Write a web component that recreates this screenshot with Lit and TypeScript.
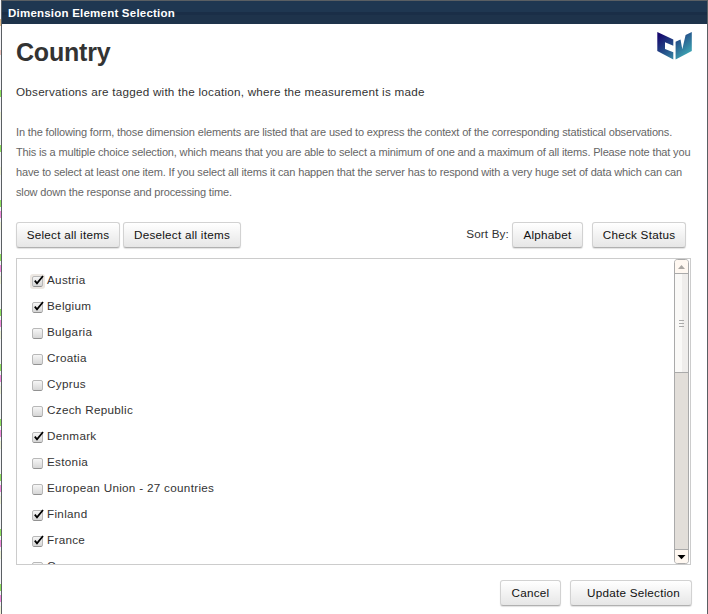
import { LitElement, html, css, svg } from "lit";
import { customElement, property } from "lit/decorators.js";
import { classMap } from "lit/directives/class-map.js";

@customElement("push-button")
class PushButton extends LitElement {
  static styles = css`
    :host { display: block; flex: none; }
    button {
      box-sizing: border-box; width: 100%; height: 26px; padding: 0; display: block;
      border: 1px solid #d2d2d2; border-bottom-color: #b0b0b0; border-radius: 3px;
      background: linear-gradient(#ffffff, #e6e6e6);
      box-shadow: 0 1px 1px rgba(0, 0, 0, 0.12);
      font: 11.7px/24px "Liberation Sans", Arial, sans-serif; letter-spacing: 0.25px; color: #111; white-space: nowrap;
    }
  `;
  render() {
    return html`<button><slot></slot></button>`;
  }
}

@customElement("check-item")
class CheckItem extends LitElement {
  @property() label = "";
  @property({ type: Boolean }) checked = false;
  @property({ type: Boolean }) focused = false;
  static styles = css`
    :host { display: flex; height: 26px; }
    .box { width: 15px; height: 15px; margin-top: 7px; border-radius: 3px; flex: none; }
    .hot { background: #ece7e2; }
    svg { display: block; overflow: visible; }
    .label { font: 11.7px/26px "Liberation Sans", Arial, sans-serif; letter-spacing: 0.3px; color: #333; margin-left: 2px; white-space: nowrap; }
  `;
  render() {
    return html`
      <div class=${classMap({ box: true, hot: this.focused })}>
        <svg width="15" height="15" viewBox="0 0 15 15">
          <defs><linearGradient id="g" x1="0" y1="0" x2="0" y2="1">
            <stop offset="0" stop-color="#f8f8f8"></stop><stop offset="1" stop-color="#d4d4d4"></stop>
          </linearGradient></defs>
          <rect x="2.5" y="2.5" width="10" height="10" rx="1.5" fill="url(#g)" stroke="#b8b8b8"></rect>
          <path d="M3.5 12.5H11.5" stroke="#929292"></path>
          ${this.checked ? svg`<path d="M4.8 6.6L7 9.3L13 2" fill="none" stroke="#000" stroke-width="1.8"></path>` : ""}
        </svg>
      </div>
      <div class="label">${this.label}</div>`;
  }
}

@customElement("app-root")
class AppRoot extends LitElement {
  private countries: [string, boolean][] = [
    ["Austria", true], ["Belgium", true], ["Bulgaria", false], ["Croatia", false],
    ["Cyprus", false], ["Czech Republic", false], ["Denmark", true], ["Estonia", false],
    ["European Union - 27 countries", false], ["Finland", true], ["France", true], ["Germany", false],
  ];

  static styles = css`
    :host {
      display: flex; width: 708px; height: 614px; overflow: hidden; background: #fff;
      font-family: "Liberation Sans", Arial, sans-serif; color: #333;
    }
    .page { width: 1px; flex: none; }
    .page svg { display: block; }
    .dialog {
      box-sizing: border-box; width: 707px; height: 614px; border: 1px solid #5a5f63;
      border-bottom: 0; display: flex; flex-direction: column; background: #fff;
    }
    .title {
      height: 23px; flex: none; padding-left: 6px; color: #fff; white-space: nowrap;
      font: bold 11.5px/24px "Liberation Sans", Arial, sans-serif; letter-spacing: 0.22px;
      background: linear-gradient(#1f3751 0 11px, #1a2e47 11px 14px, #1e334b 14px);
    }
    .content { padding: 0 15px 0 14px; display: flex; flex-direction: column; }
    .head { display: flex; justify-content: space-between; height: 58px; }
    h1 { margin: 13px 0 0; font-size: 25px; letter-spacing: -0.2px; line-height: 30px; }
    .logo { margin-top: 8px; flex: none; }
    .lead { font-size: 11.7px; letter-spacing: 0.235px; line-height: 20px; height: 40px; white-space: nowrap; }
    .note { font-size: 11px; letter-spacing: -0.155px; line-height: 20px; color: #666; height: 100px; white-space: nowrap; }
    .tools { display: flex; height: 36px; font-size: 11.7px; letter-spacing: 0.15px; }
    .sort { margin-left: auto; line-height: 24px; margin-right: 3px; }
    .list {
      box-sizing: border-box; width: 675px; height: 307px; border: 1px solid #ccc;
      display: flex; justify-content: space-between; overflow: hidden;
    }
    .items { padding: 8px 0 0 13px; }
    .bar { flex: none; margin-right: 1px; }
    .actions { display: flex; justify-content: flex-end; gap: 9px; margin-top: 15px; }
    .w-select { width: 104px; margin-right: 3px; }
    .w-deselect { width: 118px; }
    .w-alpha { width: 71px; margin-right: 9px; }
    .w-check { width: 94px; margin-right: 6px; }
    .w-cancel { width: 61px; }
    .w-update { width: 122px; }
    .indent { padding-left: 5px; }
  `;

  private stripe() {
    return [90, 145, 200, 254, 309, 364, 419, 474, 529, 584].map((y) => svg`
      <rect y=${y} width="1" height="7" fill="#8de05c"></rect>
      ${y > 145 ? svg`<rect y=${y + 11} width="1" height="7" fill="#ef8bdc"></rect>` : ""}
      <rect y=${y + 22} width="1" height="8" fill="#eef2d6"></rect>`);
  }

  render() {
    return html`
      <div class="page">
        <svg width="1" height="614">
          <rect width="1" height="614" fill="#f4f4f7"></rect>
          <rect y="19" width="1" height="7" fill="#e0b98a"></rect>
          <rect y="50" width="1" height="5" fill="#efc4bd"></rect>
          ${this.stripe()}
        </svg>
      </div>
      <div class="dialog">
        <div class="title">Dimension Element Selection</div>
        <div class="content">
          <div class="head">
            <h1>Country</h1>
            <svg class="logo" width="35" height="28" viewBox="0 0 35 28">
              <defs><linearGradient id="lg" gradientUnits="userSpaceOnUse" x1="4" y1="2" x2="26" y2="28">
                <stop offset="0" stop-color="#170a6e"></stop><stop offset=".5" stop-color="#26568c"></stop><stop offset="1" stop-color="#3fa9b5"></stop>
              </linearGradient></defs>
              <path fill="url(#lg)" d="M.3 0L16.3 7.5V13.7L8 10.3V17L16.3 20.3V27.5L.3 19ZM18.6 9.8L23.5 7.5L25.3 17.3L28.6 3L34.8 0V19L18.6 27.5Z"></path>
            </svg>
          </div>
          <div class="lead">Observations are tagged with the location, where the measurement is made</div>
          <div class="note">In the following form, those dimension elements are listed that are used to express the context of the corresponding statistical observations.<br>This is a multiple choice selection, which means that you are able to select a minimum of one and a maximum of all items. Please note that you<br>have to select at least one item. If you select all items it can happen that the server has to respond with a very huge set of data which can can<br>slow down the response and processing time.</div>
          <div class="tools">
            <push-button class="w-select">Select all items</push-button>
            <push-button class="w-deselect">Deselect all items</push-button>
            <div class="sort">Sort By:</div>
            <push-button class="w-alpha">Alphabet</push-button>
            <push-button class="w-check">Check Status</push-button>
          </div>
          <div class="list">
            <div class="items">
              ${this.countries.map(([name, on], i) => html`<check-item .label=${name} .checked=${on} .focused=${i === 0}></check-item>`)}
            </div>
            <svg class="bar" width="15" height="305" viewBox="0 0 15 305">
              <rect x=".5" y=".5" width="14" height="304" rx="3" fill="#e2ded9" stroke="#aaa"></rect>
              <path d="M1 14V3Q1 1 3 1H12Q14 1 14 3V14Z" fill="#fff8f1"></path>
              <rect x="1" y="15" width="7" height="98" fill="#faf9f7"></rect>
              <rect x="8" y="15" width="6" height="98" fill="#efedeb"></rect>
              <path d="M1 14.5H14M1 113.5H14M5 61.5H10M5 64.5H10M5 67.5H10" stroke="#aaa"></path>
              <path d="M4 10L7.5 6L11 10Z" fill="#aaa6a2"></path>
              <path d="M1 290V302Q1 304 3 304H12Q14 304 14 302V290Z" fill="#fff8f1"></path>
              <path d="M1 290.5H14" stroke="#aaa"></path>
              <path d="M3.5 296L7.5 300.3L11.5 296Z" fill="#000"></path>
            </svg>
          </div>
          <div class="actions">
            <push-button class="w-cancel">Cancel</push-button>
            <push-button class="w-update"><span class="indent">Update Selection</span></push-button>
          </div>
        </div>
      </div>`;
  }
}
